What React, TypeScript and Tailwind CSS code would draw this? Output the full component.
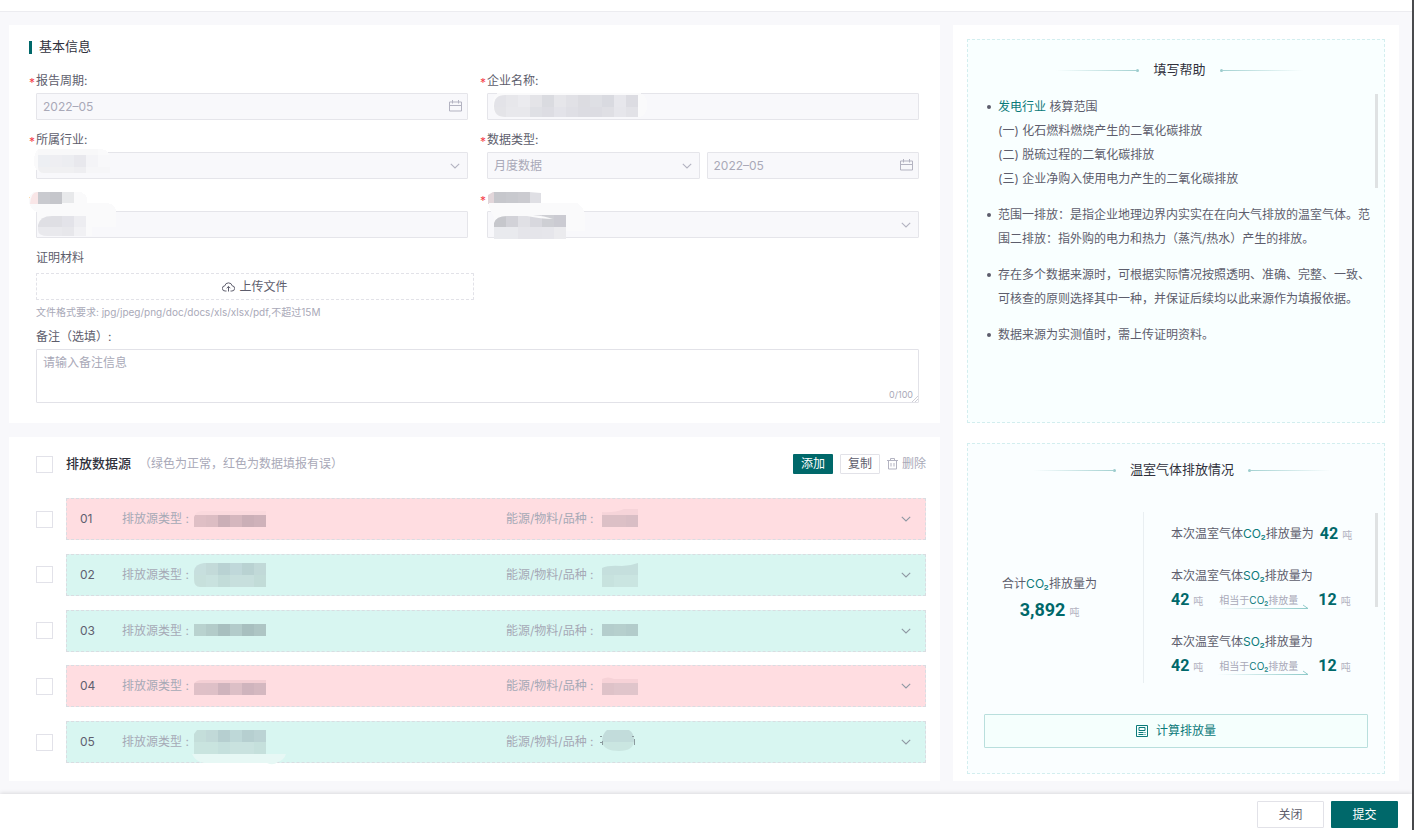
import { useState } from 'react'
import type { ReactNode } from 'react'

type Block = [x: number, y: number, w: number, h: number, fill: string]

interface MosaicProps {
  id: string
  width: number
  height: number
  className: string
  base?: string
  clip: string
  blocks: Block[]
}

// pixelated cover over a private value
function Mosaic({ id, width, height, className, base, clip, blocks }: MosaicProps) {
  return (
    <svg
      width={width}
      height={height}
      className={`absolute pointer-events-none ${className}`}
      shapeRendering="crispEdges"
      aria-hidden="true"
    >
      <clipPath id={id}>
        <path d={clip} />
      </clipPath>
      {base && <path d={base} fill="#fafafb" />}
      <g clipPath={`url(#${id})`}>
        {blocks.map(([x, y, w, h, fill], i) => (
          <rect key={i} x={x} y={y} width={w} height={h} fill={fill} />
        ))}
      </g>
    </svg>
  )
}

function CalendarIcon() {
  return (
    <svg
      width="13"
      height="12"
      viewBox="0 0 13 12"
      fill="none"
      stroke="#b3b3c1"
      className="absolute right-[6px] top-[7px] pointer-events-none"
    >
      <path d="M.5 2h12v9H.5zM.5 5.5h12M3.5 0v3.5M9.5 0v3.5" />
    </svg>
  )
}

function Chevron({ color = '#b3b3c1' }: { color?: string }) {
  return (
    <svg width="10" height="6" viewBox="0 0 10 6" fill="none" stroke={color} strokeWidth="1.1">
      <path d="M.8.8 5 5 9.2.8" />
    </svg>
  )
}

const control =
  'block w-full h-[27px] px-1.5 text-xs text-[#a9a9b8] bg-[#f8f8fb] border border-[#e5e5ea] rounded-[1px] appearance-none opacity-100'

function DateInput({ id, label }: { id: string; label?: string }) {
  return (
    <div className="relative flex-1">
      <input id={id} aria-label={label} className={control} value="2022–05" disabled readOnly />
      <CalendarIcon />
    </div>
  )
}

function SelectInput({ id, value }: { id: string; value?: string }) {
  return (
    <div className="relative flex-1">
      <select id={id} className={control} disabled>
        <option>{value}</option>
      </select>
      <div className="absolute right-[8px] top-[11px] pointer-events-none">
        <Chevron />
      </div>
    </div>
  )
}

interface FieldProps {
  id: string
  label: ReactNode
  children: ReactNode
}

function Field({ id, label, children }: FieldProps) {
  return (
    <div>
      <div className="flex h-5 mb-[2px] leading-5">
        <span className="w-[7px] leading-6 text-[#f5424c]">*</span>
        <label htmlFor={id} className="relative">
          {label}
        </label>
      </div>
      <div className="relative ml-[7px] flex gap-[7px]">{children}</div>
    </div>
  )
}

function BasicInfo() {
  const [remark, setRemark] = useState('')

  return (
    <section className="bg-white pl-5 pr-5 pt-3 pb-5">
      <h2 className="flex items-center gap-[7px] h-5 mb-[14px] text-[13px] text-[#30313c]">
        <span className="w-[3px] h-[13px] bg-[#00686a]" />
        基本信息
      </h2>

      <div className="grid grid-cols-2 gap-x-3 gap-y-[10px] pr-px">
        <Field id="period" label="报告周期:">
          <DateInput id="period" />
        </Field>
        <Field id="company" label="企业名称:">
          <input id="company" className={control} disabled />
          <Mosaic
            id="m-company"
            width={165}
            height={26}
            className="left-0 top-0"
            base="M12 0h140q8 1 8 12t-8 12H18Q6 24 6 12T12 0Z"
            clip="M18 2h133v22H18Q7 24 7 13T18 2Z"
            blocks={[
              [7, 2, 12, 12, '#e3e3e8'], [19, 2, 12, 12, '#e7e7eb'], [31, 2, 12, 12, '#ebebef'],
              [43, 2, 12, 12, '#e4e4e8'], [55, 2, 12, 12, '#dadbe0'], [67, 2, 12, 12, '#e6e6ea'],
              [79, 2, 12, 12, '#e1e1e6'], [91, 2, 12, 12, '#dcdce1'], [103, 2, 12, 12, '#dedfe4'],
              [115, 2, 12, 12, '#d9dae0'], [127, 2, 12, 12, '#e7e7ec'], [139, 2, 12, 12, '#dcdce2'],
              [7, 14, 12, 12, '#e4e4e8'], [19, 14, 24, 12, '#e8e8ec'], [43, 14, 12, 12, '#dfe0e5'],
              [55, 14, 12, 12, '#dddde3'], [67, 14, 12, 12, '#e3e3e9'], [79, 14, 12, 12, '#dfdfe5'],
              [91, 14, 24, 12, '#dcdce2'], [115, 14, 12, 12, '#dfdfe4'], [127, 14, 12, 12, '#e6e6eb'],
              [139, 14, 12, 12, '#e2e2e7'],
            ]}
          />
        </Field>
        <Field id="industry" label="所属行业:">
          <SelectInput id="industry" />
          <Mosaic
            id="m-industry"
            width={80}
            height={26}
            className="-left-1 -top-1"
            base="M10 1h60q8 2 8 10v14H12Q2 25 2 13T10 1Z"
            clip="M6 1h72v24H12Q6 25 6 19Z"
            blocks={[
              [6, 1, 60, 6, '#f8f8f9'], [6, 7, 12, 12, '#edeff3'], [18, 7, 12, 12, '#eeeef2'],
              [30, 7, 12, 12, '#ecedf1'], [42, 7, 12, 12, '#e8e8ed'], [54, 7, 12, 12, '#f4f4f7'],
              [66, 7, 12, 12, '#f8f8fa'], [6, 19, 36, 6, '#f0f0f2'], [42, 19, 12, 6, '#eeeef1'],
              [54, 19, 24, 6, '#f6f6f8'],
            ]}
          />
        </Field>
        <Field id="data-type" label="数据类型:">
          <SelectInput id="data-type" value="月度数据" />
          <DateInput id="data-month" label="数据月份" />
        </Field>
        <Field
          id="hidden-left"
          label={
            <Mosaic
              id="m-label-left"
              width={60}
              height={24}
              className="-left-[7px] top-[2px]"
              base="M5 1h45q8 1 8 8v14H14Q0 20 0 9Q1 2 5 1Z"
              clip="M8 1h45v12H1Q2 1 8 1Z"
              blocks={[
                [0, 1, 9, 12, '#f9e6e7'], [9, 1, 12, 12, '#c9cacf'], [21, 1, 12, 12, '#c5c6cb'],
                [33, 1, 12, 12, '#e8e9eb'], [45, 1, 12, 12, '#fafafb'],
              ]}
            />
          }
        >
          <input id="hidden-left" aria-label="填报信息" className={control} disabled />
          <Mosaic
            id="m-input-left"
            width={84}
            height={36}
            className="left-0 -top-2"
            base="M0 4 30 0h42q8 2 8 10v14H56v9H12Q2 32 2 24Z"
            clip="M2 22Q4 13 16 13H50v20H12Q2 33 2 27Z"
            blocks={[
              [2, 12, 24, 12, '#dfdfe4'], [26, 12, 12, 12, '#e3e3e9'], [38, 12, 12, 12, '#ededf1'],
              [2, 24, 24, 12, '#e9e9ed'], [26, 24, 12, 12, '#e7e7eb'], [38, 24, 12, 12, '#f1f1f4'],
            ]}
          />
        </Field>
        <Field
          id="hidden-right"
          label={
            <Mosaic
              id="m-label-right"
              width={56}
              height={14}
              className="left-0 top-[2px]"
              clip="M6 1h36l12 1v11H1V4Z"
              blocks={[
                [0, 1, 7, 12, '#e2d6da'], [7, 1, 12, 12, '#c6c7cc'], [19, 1, 12, 12, '#c8c9ce'],
                [31, 1, 12, 12, '#cbcbd0'], [43, 1, 12, 12, '#dfdfe4'],
              ]}
            />
          }
        >
          <SelectInput id="hidden-right" />
          <Mosaic
            id="m-input-right"
            width={104}
            height={36}
            className="left-0 -top-2"
            base="M2 0h88q8 5 8 12v16H79v7H7V14L2 4Z"
            clip="M7 20Q9 13 20 13h20q14 3 26 3-8-3-20-4H79v24H7Z"
            blocks={[
              [7, 12, 12, 12, '#c6c7cc'], [19, 12, 12, 12, '#d2d2d8'], [31, 12, 12, 12, '#e0e0e5'],
              [43, 12, 12, 12, '#d8d8de'], [55, 12, 12, 12, '#cecfd4'], [67, 12, 12, 12, '#cbcbd2'],
              [7, 24, 24, 12, '#e9eaee'], [31, 24, 24, 12, '#e5e5ea'], [55, 24, 12, 12, '#e6e6eb'],
              [67, 24, 12, 12, '#ebebee'],
            ]}
          />
        </Field>
      </div>

      <div className="ml-[7px] mr-px mt-[10px]">
        <p className="leading-5 mb-[5px]">证明材料</p>
        <button
          type="button"
          className="flex items-center justify-center gap-1 w-[438px] max-w-full h-[27px] border border-dashed border-[#e2e2e8] rounded-[1px] text-xs"
        >
          <svg width="13" height="12" viewBox="0 0 13 12" fill="none" stroke="#5d5d6c">
            <path d="M4.5 10H3.2A2.6 2.6 0 0 1 2.8 4.8a3.8 3.8 0 0 1 7.4 0A2.6 2.6 0 0 1 9.8 10H8.5M6.5 10.5V5.6M4.7 7.2l1.8-1.8 1.8 1.8" />
          </svg>
          上传文件
        </button>
        <p className="mt-1 mb-[7px] text-[10px] leading-4 text-[#a9a9b8]">
          文件格式要求: jpg/jpeg/png/doc/docs/xls/xlsx/pdf,不超过15M
        </p>
        <label htmlFor="remark" className="block leading-5 mb-[2px]">
          备注（选填）:
        </label>
        <div className="relative">
          <textarea
            id="remark"
            value={remark}
            maxLength={100}
            onChange={(e) => setRemark(e.target.value)}
            placeholder="请输入备注信息"
            className="block w-full h-[54px] px-1.5 py-[5px] text-xs leading-4 border border-[#e2e2e8] rounded-[1px] resize-none placeholder:text-[#a9a9b8] focus:outline-none"
          />
          <span className="absolute right-[6px] bottom-[2px] text-[9px] leading-3 text-[#a9a9b8]">
            {remark.length}/100
          </span>
          <svg
            width="6"
            height="6"
            viewBox="0 0 6 6"
            stroke="#b9b9c4"
            strokeWidth=".7"
            className="absolute right-[1px] bottom-[1px]"
          >
            <path d="M0 6 6 0M3 6l3-3" />
          </svg>
        </div>
      </div>
    </section>
  )
}

interface Source {
  no: string
  error: boolean
  typeBlocks: Block[]
  typeClip: string
  kindBlocks: Block[]
  kindClip: string
}

const sources: Source[] = [
  {
    no: '01',
    error: true,
    typeClip: 'M0 10Q2 4 8 4h64v18H0Z',
    typeBlocks: [
      [0, 4, 72, 4, '#fad9dd'], [0, 8, 12, 12, '#dfbfc5'], [12, 8, 12, 12, '#dcbdc3'],
      [24, 8, 12, 12, '#cbafb7'], [36, 8, 12, 12, '#d5b7be'], [48, 8, 12, 12, '#cbafb7'],
      [60, 8, 12, 12, '#cfb2ba'],
    ],
    kindClip: 'M0 5q12 1 22-3h14v20H0Z',
    kindBlocks: [[0, 0, 36, 8, '#f6d4d9'], [0, 8, 24, 12, '#dcc0c6'], [24, 8, 12, 12, '#d9bec5']],
  },
  {
    no: '02',
    error: false,
    typeClip: 'M10 0h62v24H6Q0 24 0 16V8Q1 1 10 0Z',
    typeBlocks: [
      [0, 0, 12, 12, '#c7dfde'], [12, 0, 12, 12, '#c3dad9'], [24, 0, 12, 12, '#b9d2d3'],
      [36, 0, 12, 12, '#c0d8da'], [48, 0, 12, 12, '#b9d2d2'], [60, 0, 12, 12, '#c1d9d8'],
      [0, 12, 12, 12, '#c7e0dc'], [12, 12, 12, 12, '#c9e2df'], [24, 12, 12, 12, '#c2dcd9'],
      [36, 12, 24, 12, '#c7dfdd'], [60, 12, 12, 12, '#c2dcd8'],
    ],
    kindClip: 'M0 5Q6 2 20 3q8 0 16-3v24H0Z',
    kindBlocks: [[0, 0, 36, 12, '#c5dfdd'], [0, 12, 12, 12, '#c7e2de'], [12, 12, 24, 12, '#cae5e1']],
  },
  {
    no: '03',
    error: false,
    typeClip: 'M0 4h72v14H0Z',
    typeBlocks: [
      [0, 5, 12, 12, '#b9d2cf'], [12, 5, 12, 12, '#b3cbc9'], [24, 5, 12, 12, '#a8bfbf'],
      [36, 5, 12, 12, '#b3cbca'], [48, 5, 12, 12, '#a8bfbf'], [60, 5, 12, 12, '#aec5c4'],
    ],
    kindClip: 'M0 4h36v14H0Z',
    kindBlocks: [[0, 5, 12, 12, '#b4cdcc'], [12, 5, 12, 12, '#b6cfcd'], [24, 5, 12, 12, '#b3cccb']],
  },
  {
    no: '04',
    error: true,
    typeClip: 'M0 10Q2 6 8 6h64v18H0Z',
    typeBlocks: [
      [0, 6, 72, 4, '#f3cfd4'], [0, 9, 12, 12, '#dfc0c7'], [12, 9, 12, 12, '#dec0c7'],
      [24, 9, 12, 12, '#cfb4bd'], [36, 9, 12, 12, '#dcbfc6'], [48, 9, 12, 12, '#cfb4bd'],
      [60, 9, 12, 12, '#d4b8c0'],
    ],
    kindClip: 'M0 5Q6 2 12 5h24v18H0Z',
    kindBlocks: [[0, 0, 36, 9, '#f6d2d7'], [0, 9, 12, 12, '#dec2c8'], [12, 9, 24, 12, '#e0c5cb']],
  },
  {
    no: '05',
    error: false,
    typeClip: 'M3 0h69v24H0V4Z',
    typeBlocks: [
      [0, 0, 12, 12, '#c4deda'], [12, 0, 12, 12, '#c1d9d8'], [24, 0, 12, 12, '#b6cfd0'],
      [36, 0, 12, 12, '#bed8d8'], [48, 0, 12, 12, '#b6cfd0'], [60, 0, 12, 12, '#bbd3d4'],
      [0, 12, 24, 12, '#c9e4df'], [24, 12, 12, 12, '#c5e0dd'], [36, 12, 24, 12, '#c9e2df'],
      [60, 12, 12, 12, '#c5e0dc'],
    ],
    kindClip: 'M5 0h22q5 3 5 10 0 11-15 11T0 12Q0 4 5 0Z',
    kindBlocks: [[0, 0, 36, 12, '#c2dcdb'], [0, 12, 36, 12, '#cae6e1']],
  },
]

const checkbox =
  'appearance-none shrink-0 w-[17px] h-[17px] bg-white border border-[#e2e2e9] checked:bg-[#00686a]'

function SourceRow({ source }: { source: Source }) {
  return (
    <div className="flex items-center gap-[13px]">
      <input type="checkbox" aria-label={`选择 ${source.no}`} className={checkbox} />
      <div
        className={`flex flex-1 items-center h-[42px] pl-[13px] pr-[14px] border border-dashed border-[#d9dde2] ${
          source.error ? 'bg-[#ffdde1]' : 'bg-[#d8f6f1]'
        }`}
      >
        <span className="w-[42px] text-[#60606f]">{source.no}</span>
        <div className="flex flex-1 items-center">
          <span className="w-[72px] text-[#a6a9b6]">排放源类型 :</span>
          <span className="relative w-[72px] h-6">
            <Mosaic
              id={`type-${source.no}`}
              width={72}
              height={24}
              className="left-0 top-0"
              clip={source.typeClip}
              blocks={source.typeBlocks}
            />
            {source.no === '05' && (
              <svg width="94" height="11" className="absolute -left-[2px] top-6">
                <path d="M0 0h94q-2 6-8 8-5 4-11 1H12Q4 8 0 0Z" fill="#e7f8f5" />
              </svg>
            )}
          </span>
        </div>
        <div className="flex flex-1 items-center">
          <span className="w-24 text-[#a6a9b6]">能源/物料/品种 :</span>
          <span className="relative w-9 h-6">
            <Mosaic
              id={`kind-${source.no}`}
              width={36}
              height={24}
              className="left-0 top-0"
              clip={source.kindClip}
              blocks={source.kindBlocks}
            />
            {source.no === '05' && (
              <svg width="36" height="16" className="absolute -left-[2px] top-0" stroke="#8b9a9e" fill="none">
                <path d="M0 6.500h2M0 12.500h2M2.500 11v4M32 6.500h2M34.500 9v6" />
              </svg>
            )}
          </span>
        </div>
        <button type="button" aria-label={`展开 ${source.no}`} className="ml-[11px]">
          <Chevron color="#8f98a3" />
        </button>
      </div>
    </div>
  )
}

function SourceList() {
  return (
    <section className="flex flex-1 flex-col bg-white pl-[27px] pr-[14px] pt-[17px] pb-[18px]">
      <div className="flex items-center h-5 mb-6">
        <input id="all" type="checkbox" className={checkbox} />
        <label htmlFor="all" className="ml-[13px] text-[13px] font-medium text-[#30313c]">
          排放数据源
        </label>
        <span className="ml-2 text-[#a9a9b8]">（绿色为正常，红色为数据填报有误）</span>
        <div className="flex gap-[7px] ml-auto">
          <button type="button" className="w-10 h-5 rounded-[1px] bg-[#00686a] text-white">
            添加
          </button>
          <button type="button" className="w-10 h-5 rounded-[1px] border border-[#e2e2e8] text-[#5d5d6c]">
            复制
          </button>
          <button type="button" className="flex items-center gap-1 h-5 text-[#a9a9b8]">
            <svg width="11" height="12" viewBox="0 0 11 12" fill="none" stroke="#b3b3c1">
              <path d="M0 2.500h11M3.500 2.500v-2h4v2M1.500 2.500v8.500h8V2.500M4 5v3.500M7 5v3.500" />
            </svg>
            删除
          </button>
        </div>
      </div>
      <div className="flex flex-1 flex-col justify-between gap-3">
        {sources.map((source) => (
          <SourceRow key={source.no} source={source} />
        ))}
      </div>
    </section>
  )
}

function PanelTitle({ children }: { children: ReactNode }) {
  return (
    <h2 className="flex items-center justify-center gap-[14px] h-5 text-[13px] text-[#30313c]">
      <span className="flex items-center">
        <span className="w-20 h-px bg-linear-to-r from-transparent to-[#a5d2d2]" />
        <span className="w-[3px] h-[3px] rounded-full bg-[#9ccccd]" />
      </span>
      {children}
      <span className="flex items-center">
        <span className="w-[3px] h-[3px] rounded-full bg-[#9ccccd]" />
        <span className="w-20 h-px bg-linear-to-r from-[#a5d2d2] to-transparent" />
      </span>
    </h2>
  )
}

function Tip({ children }: { children: ReactNode }) {
  return (
    <li className="flex gap-[7px] leading-6">
      <span className="shrink-0 w-1 h-1 mt-[10px] rounded-full bg-[#5d5d6c]" />
      <div>{children}</div>
    </li>
  )
}

function HelpPanel() {
  return (
    <section className="relative min-h-[384px] pl-[19px] pr-3 pt-5 border border-dashed border-[#d3eeef] bg-[#f9ffff]">
      <PanelTitle>填写帮助</PanelTitle>
      <ul className="flex flex-col gap-3 mt-[15px]">
        <Tip>
          <p>
            <span className="text-[#0b7a7a]">发电行业</span> 核算范围
          </p>
          <p>(一) 化石燃料燃烧产生的二氧化碳排放</p>
          <p>(二) 脱硫过程的二氧化碳排放</p>
          <p>(三) 企业净购入使用电力产生的二氧化碳排放</p>
        </Tip>
        <Tip>
          范围一排放：是指企业地理边界内实实在在向大气排放的温室气体。范围二排放：指外购的电力和热力（蒸汽/热水）产生的排放。
        </Tip>
        <Tip>
          存在多个数据来源时，可根据实际情况按照透明、准确、完整、一致、可核查的原则选择其中一种，并保证后续均以此来源作为填报依据。
        </Tip>
        <Tip>数据来源为实测值时，需上传证明资料。</Tip>
      </ul>
      <span className="absolute right-[6px] top-[54px] w-[3px] h-[94px] bg-[#dfe2e3]" />
    </section>
  )
}

function Gas({ children }: { children: ReactNode }) {
  return <span className="text-[#0b7a7a]">{children}</span>
}

function Amount({ value }: { value: string }) {
  return (
    <span className="flex items-baseline gap-1">
      <span className="font-['Liberation_Sans_Narrow',Roboto,sans-serif] text-base leading-5 font-bold text-[#00686a]">
        {value}
      </span>
      <span className="text-[10px] text-[#b3b3c1]">吨</span>
    </span>
  )
}

function ConvertedGas() {
  return (
    <div>
      <p className="leading-5">
        本次温室气体<Gas>SO₂</Gas>排放量为
      </p>
      <div className="flex items-center mt-1 h-5">
        <Amount value="42" />
        <div className="relative ml-[14px] mr-[11px] w-[90px] pl-[2px] text-[10px] leading-4 text-[#a9a9b8] whitespace-nowrap">
          相当于<Gas>CO₂</Gas>排放量
          <svg width="92" height="5" viewBox="0 0 92 5" fill="none" className="absolute left-0 -bottom-[1px]">
            <linearGradient id="arrow" x1="0" x2="92" y1="0" y2="0" gradientUnits="userSpaceOnUse">
              <stop stopColor="#8cc9c8" stopOpacity="0" />
              <stop offset="1" stopColor="#8cc9c8" />
            </linearGradient>
            <path d="M0 4.500h91L86 1" stroke="url(#arrow)" />
          </svg>
        </div>
        <Amount value="12" />
      </div>
    </div>
  )
}

function EmissionPanel() {
  return (
    <section className="relative flex flex-1 flex-col px-4 pt-4 pb-[25px] border border-dashed border-[#d3eeef] bg-[#fafeff]">
      <div className="pl-3">
        <PanelTitle>温室气体排放情况</PanelTitle>
      </div>
      <div className="flex mt-8 h-[171px]">
        <div className="flex w-[160px] flex-col items-center justify-center pr-7 border-r border-[#e9eff2]">
          <p className="leading-5">
            合计<Gas>CO₂</Gas>排放量为
          </p>
          <div className="flex items-baseline gap-1 mt-1">
            <span className="font-['Liberation_Sans_Narrow',Roboto,sans-serif] text-lg leading-6 font-bold text-[#00686a]">
              3,892
            </span>
            <span className="text-[10px] text-[#b3b3c1]">吨</span>
          </div>
        </div>
        <div className="flex flex-1 flex-col gap-[22px] pl-[27px] pt-3">
          <div className="flex items-center gap-[6px] h-5">
            <p>
              本次温室气体<Gas>CO₂</Gas>排放量为
            </p>
            <Amount value="42" />
          </div>
          <ConvertedGas />
          <ConvertedGas />
        </div>
      </div>
      <button
        type="button"
        className="flex items-center justify-center gap-2 mt-auto h-[34px] border border-[#b9dfdd] rounded-[1px] bg-[#f5fffd] text-[#0b7a7a]"
      >
        <svg width="12" height="12" viewBox="0 0 12 12" fill="none" stroke="#0b7a7a">
          <path d="M.5.500h11v11H.500zM3 2.500h6v3H3zM2.500 7.500h5M2.500 9.500h5M8.500 7.500h1M8.500 9.500h1" />
        </svg>
        计算排放量
      </button>
      <span className="absolute right-[6px] top-[69px] w-[3px] h-[94px] bg-[#dfe2e3]" />
    </section>
  )
}

export default function App() {
  return (
    <div className="flex flex-col min-h-screen border-r-2 border-[#4a4b4e] bg-[#f8f8fb] font-[Inter,'Noto_Sans_CJK_SC',sans-serif] text-xs text-[#5d5d6c]">
      <header className="h-3 border-b border-[#ececf0] bg-white" />
      <main className="flex flex-1 gap-[13px] pt-[13px] pb-[13px] pl-[9px] pr-[13px]">
        <div className="flex flex-1 flex-col gap-[14px]">
          <BasicInfo />
          <SourceList />
        </div>
        <aside className="flex w-[446px] shrink-0 flex-col gap-5 px-[14px] pt-[14px] pb-[7px] bg-white">
          <HelpPanel />
          <EmissionPanel />
        </aside>
      </main>
      <footer className="flex justify-end gap-[7px] h-9 pt-[7px] pr-[14px] bg-white shadow-[0_-1px_4px_rgba(0,0,0,0.12)]">
        <button type="button" className="w-[67px] h-[27px] border border-[#e2e2e8] rounded-[1px]">
          关闭
        </button>
        <button type="button" className="w-[67px] h-[27px] rounded-[1px] bg-[#00686a] text-white">
          提交
        </button>
      </footer>
    </div>
  )
}
